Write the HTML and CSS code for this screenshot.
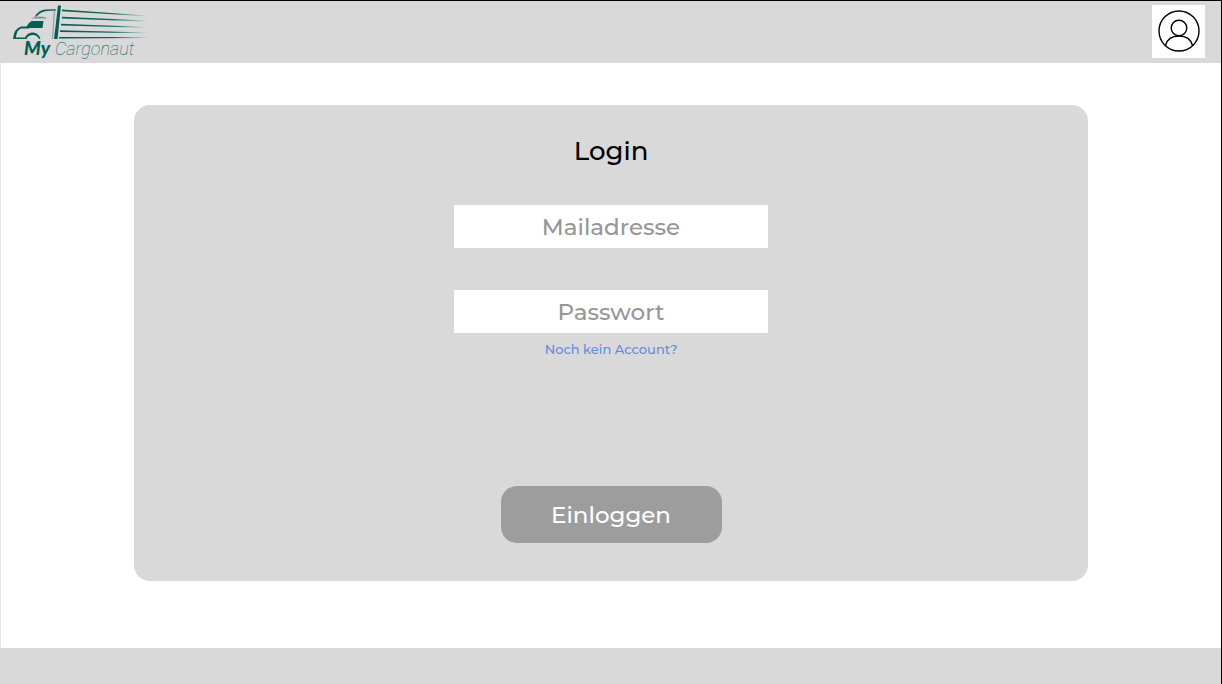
FILE: index.html
```html
<!DOCTYPE html>
<html lang="de">
<head>
<meta charset="utf-8">
<meta name="viewport" content="width=device-width, initial-scale=1">
<title>My Cargonaut</title>
<link rel="stylesheet" href="styles.css">
</head>
<body>
<header class="header">
  <a class="logo" href="#" aria-label="My Cargonaut">
    <svg width="150" height="60" viewBox="0 0 150 60">
      <defs>
        <linearGradient id="fade" gradientUnits="userSpaceOnUse" x1="60" y1="0" x2="148" y2="0">
          <stop offset="0" stop-color="#035f54"/>
          <stop offset=".6" stop-color="#035f54" stop-opacity=".95"/>
          <stop offset="1" stop-color="#035f54" stop-opacity="0"/>
        </linearGradient>
      </defs>
      <g fill="#035f54">
        <path d="M58 4.500L61 4.500L57.500 38L54 38Z"/>
        <path d="M34.500 16Q38.500 8.800 46 8.500L56 8.300L55.500 9.600L47 10Q41 10.500 37 15Z"/>
        <path d="M54 9.500H55.200L53 38H51.800Z" opacity=".4"/>
        <path d="M31 17.500Q38 14.300 46 16.500L47 17.500L35 17.500Z" opacity=".5"/>
        <path d="M31.500 20L43.500 20L42.500 27H26Q28 22 31.500 20Z"/>
        <path d="M29 25.500H21Q13.500 28 13 38H26.500Q28 34 33 34Q37 34 39 38H40.500Q38.500 31.500 33 31.500Q27.500 31.500 25 36.500H16Q16.500 29 21 27.500H29Z"/>
      </g>
      <g fill="url(#fade)">
        <path d="M62 8.500L146 14.400V15.200L62 10.300Z"/>
        <path d="M62 15.800L146 19.600V20.400L62 17.400Z"/>
        <path d="M61 22.800L146 26V26.800L61 24.400Z"/>
        <path d="M60 29.300L147 31.400V32.200L60 30.900Z"/>
        <path d="M59 36H148V37L59 37.600Z"/>
      </g>
      <text class="logo-my" x="24" y="54">My</text>
      <text class="logo-name" x="55" y="54">Cargonaut</text>
    </svg>
  </a>
  <button class="profile" type="button" aria-label="Profil">
    <svg width="42" height="42" viewBox="0 0 42 42" fill="none" stroke="#000" stroke-width="1.400">
      <circle cx="21" cy="21" r="20"/>
      <circle cx="21" cy="18" r="7.800"/>
      <path d="M7.500 35.500C9 29.500 14 26 21 26S33 29.500 34.500 35.500"/>
    </svg>
  </button>
</header>
<main class="main">
  <form class="card">
    <h1 class="title">Login</h1>
    <input class="field" type="email" placeholder="Mailadresse" aria-label="Mailadresse">
    <input class="field field-password" type="password" placeholder="Passwort" aria-label="Passwort">
    <a class="register" href="#">Noch kein Account?</a>
    <button class="submit" type="button">Einloggen</button>
  </form>
</main>
<footer class="footer"></footer>
</body>
</html>
```
FILE: styles.css
```css
* {
  box-sizing: border-box;
}

body {
  margin: 0;
  min-height: 100vh;
  display: flex;
  flex-direction: column;
  border-top: 1px solid #000;
  border-right: 1px solid #000;
  background: #fff;
  font-family: Montserrat, Inter, sans-serif;
}

.header {
  display: flex;
  align-items: center;
  justify-content: space-between;
  height: 62px;
  padding: 0 16px 2px 0;
  background: #d9d9d9;
}

.logo,
.logo svg,
.profile svg {
  display: block;
}

.logo-my,
.logo-name {
  font-style: italic;
  fill: #035f54;
}

.logo-my {
  font-family: Lato, sans-serif;
  font-size: 19px;
  font-weight: 900;
}

.logo-name {
  font-family: Roboto, sans-serif;
  font-size: 18px;
  font-weight: 100;
}

.profile {
  display: flex;
  align-items: center;
  justify-content: center;
  width: 53px;
  height: 53px;
  padding: 0;
  border: 0;
  background: #fff;
}

.main {
  flex: 1;
  display: flex;
  padding: 42px 133px 67px;
  border-left: 1px solid #e6e6e6;
}

.card {
  flex: 1;
  display: flex;
  flex-direction: column;
  align-items: center;
  padding: 30px 24px 38px;
  border-radius: 16px;
  background: #d9d9d9;
}

.title {
  margin: 0 0 38px;
  font-size: 26px;
  font-weight: 500;
  line-height: 32px;
}

.field {
  width: 314px;
  max-width: 100%;
  height: 43px;
  padding: 0 8px;
  border: 0;
  background: #fff;
  color: #000;
  font-family: inherit;
  font-size: 23px;
  font-weight: 500;
  text-align: center;
}

.field::placeholder {
  color: #969696;
  opacity: 1;
}

.field-password {
  margin-top: 42px;
}

.register {
  margin: 8px 0 24px;
  color: #678ae0;
  font-size: 13px;
  font-weight: 500;
  line-height: 16px;
  text-decoration: none;
}

.submit {
  width: 221px;
  max-width: 100%;
  height: 57px;
  margin-top: auto;
  border: 0;
  border-radius: 16px;
  background: #9d9d9d;
  color: #fff;
  font-family: inherit;
  font-size: 23px;
  font-weight: 500;
}

.footer {
  height: 36px;
  background: #d9d9d9;
}
```
